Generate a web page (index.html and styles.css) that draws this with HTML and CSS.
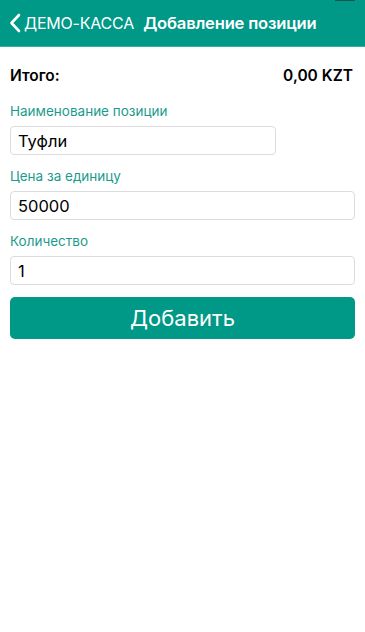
FILE: index.html
```html
<!DOCTYPE html>
<html lang="ru">
<head>
    <meta charset="UTF-8">
    <meta name="viewport" content="width=device-width, initial-scale=1.0">
    <title>Добавление позиции</title>
    <link rel="stylesheet" href="styles.css">
</head>
<body>
    <div class="header">
        <div class="status-mark"></div>
        <a class="back" href="#">
            <svg class="chevron" width="12" height="20" viewBox="0 0 12 20">
                <path d="M10 2 L2.5 10 L10 18" fill="none" stroke="#fff" stroke-width="2.6" stroke-linecap="round" stroke-linejoin="round"/>
            </svg>
            <span>ДЕМО-КАССА</span>
        </a>
        <div class="title">Добавление позиции</div>
    </div>

    <div class="content">
        <div class="total">
            <span>Итого:</span>
            <span>0,00 KZT</span>
        </div>

        <label class="label">Наименование позиции</label>
        <div class="field short">Туфли</div>

        <label class="label">Цена за единицу</label>
        <div class="field">50000</div>

        <label class="label">Количество</label>
        <div class="field">1</div>

        <button class="add-btn">Добавить</button>
    </div>
</body>
</html>
```

FILE: styles.css
```css
body {
    font-family: Inter, "Open Sans", sans-serif;
    margin: 0;
    background-color: #fff;
    color: #000;
}

.header {
    position: relative;
    display: flex;
    align-items: center;
    height: 46px;
    background-color: #009886;
    border-bottom: 1px solid #3aae9f;
    color: #fff;
    padding-left: 9px;
}

.status-mark {
    position: absolute;
    top: 0;
    right: 10px;
    width: 20px;
    height: 1px;
    background-color: #15534b;
}

.back {
    display: flex;
    align-items: center;
    color: #fff;
    text-decoration: none;
    font-size: 16px;
    letter-spacing: -0.2px;
}

.chevron {
    margin-right: 3px;
}

.title {
    margin-left: 9px;
    font-size: 16.6px;
    font-weight: 600;
    letter-spacing: -0.2px;
}

.content {
    padding: 19px 10px 0 10px;
    display: flex;
    flex-direction: column;
}

.total {
    display: flex;
    justify-content: space-between;
    font-size: 15.5px;
    line-height: 20px;
    font-weight: 600;
    padding-right: 2px;
    margin-bottom: 17px;
}

.label {
    color: #1c9b8b;
    font-size: 13.5px;
    line-height: 16px;
    margin-bottom: 7px;
}

.field {
    height: 29px;
    border: 1px solid #dcdcdc;
    border-radius: 4px;
    box-sizing: border-box;
    padding-left: 7px;
    display: flex;
    align-items: center;
    font-size: 16.5px;
    margin-bottom: 13px;
}

.field.short {
    width: 266px;
}

.add-btn {
    height: 42px;
    border: none;
    border-radius: 5px;
    background-color: #009886;
    color: #fff;
    font-family: Inter, "Open Sans", sans-serif;
    font-size: 22px;
    margin-top: -1px;
}
```
